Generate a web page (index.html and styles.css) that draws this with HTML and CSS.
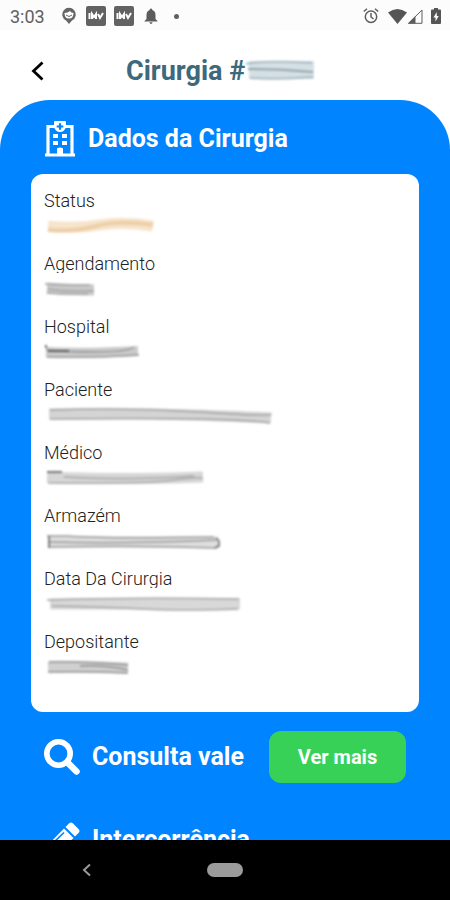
FILE: index.html
```html
<!DOCTYPE html>
<html lang="pt-BR">
<head>
    <meta charset="UTF-8">
    <meta name="viewport" content="width=device-width, initial-scale=1.0">
    <title>Cirurgia</title>
    <link rel="stylesheet" href="styles.css">
</head>
<body>
    <div class="app">
        <div class="status-bar">
            <span class="time">3:03</span>
            <svg width="16" height="18" viewBox="0 0 16 18">
                <path d="M8 17L5 13.500A6.700 6.700 0 1 1 11 13.500Z" fill="#666"/>
                <path d="M3.500 6Q7 6 9 4Q10 6 12.500 6Q12.500 11.500 8 11.500T3.500 6Z" fill="#fff"/>
                <path d="M5 8Q8 11 11 8" fill="none" stroke="#666" stroke-width="1"/>
            </svg>
            <svg class="tile" width="20" height="20" viewBox="0 0 20 20">
                <rect width="20" height="20" rx="2" fill="#626262"/>
                <path d="M3.500 7V13M6 13V8L8 11L10 8V13M12 8L14 12L17 7" fill="none" stroke="#fff" stroke-width="2"/>
            </svg>
            <svg width="20" height="20" viewBox="0 0 20 20">
                <rect width="20" height="20" rx="2" fill="#626262"/>
                <path d="M3.500 7V13M6 13V8L8 11L10 8V13M12 8L14 12L17 7" fill="none" stroke="#fff" stroke-width="2"/>
            </svg>
            <svg class="bell" width="14" height="16" viewBox="0 0 14 16">
                <path d="M7 0.500A1.300 1.300 0 0 1 8.300 2Q11.500 3 11.500 7V11L13.500 13V13.500H0.500V13L2.500 11V7Q2.500 3 5.700 2A1.300 1.300 0 0 1 7 0.500ZM5.300 14.300H8.700Q8 16 7 16T5.300 14.300Z" fill="#5c5c5c"/>
            </svg>
            <i class="dot"></i>
            <div class="system">
                <svg width="16" height="16" viewBox="0 0 16 16" fill="none" stroke="#5c5c5c" stroke-width="1.500">
                    <circle cx="8" cy="8.700" r="5.700"/>
                    <path d="M0.800 3.500L4 0.800M12 0.800L15.200 3.500M8 5V9L10.500 11"/>
                </svg>
                <svg class="wifi" width="19" height="15" viewBox="0 0 19 15">
                    <path d="M0 3.500Q9.500-3.500 19 3.500L9.500 15Z" fill="#555"/>
                </svg>
                <svg class="signal" width="16" height="15" viewBox="0 0 16 15">
                    <path d="M1.500 14.300L15 1V14.300Z" fill="none" stroke="#5c5c5c"/>
                    <path d="M1 14.500L8.500 7V14.500Z" fill="#5c5c5c"/>
                </svg>
                <svg class="battery" width="10" height="16" viewBox="0 0 10 16">
                    <path d="M3 0H7V1.500H9Q10 1.500 10 2.500V15Q10 16 9 16H1Q0 16 0 15V2.500Q0 1.500 1 1.500H3Z" fill="#555"/>
                    <path d="M5.800 4L2.500 9.500H4.500V13.500L7.700 8H5.800Z" fill="#fff"/>
                </svg>
            </div>
        </div>

        <header class="header">
            <button class="back" aria-label="Voltar">
                <svg width="14" height="22" viewBox="0 0 14 22">
                    <path d="M12.500 2.500L3.500 11L12.500 19.500" fill="none" stroke="#000" stroke-width="2.800"/>
                </svg>
            </button>
            <h1>Cirurgia #</h1>
            <svg class="smudge" width="76" height="22" viewBox="0 0 76 22">
                <path d="M4 10H69" stroke="#d6e0e4" stroke-width="18"/>
                <path d="M1 4Q20 0 67 3M5 18Q34 20 68 17" stroke="#a9bcc3" stroke-width="2"/>
                <path d="M3 9Q35 9 68 12" stroke="#8fa5ae" stroke-width="2"/>
            </svg>
        </header>

        <main class="panel">
            <div class="section-title">
                <svg width="32" height="36" viewBox="0 0 32 36">
                    <path d="M4 34V5.500H11M21 5.500H28V34" fill="none" stroke="#fff" stroke-width="3.200"/>
                    <path d="M1 34H31" stroke="#fff" stroke-width="3.200"/>
                    <path d="M11 0H21Q22 0 22 1V6Q20.500 11 16 11T10 6V1Q10 0 11 0Z" fill="#fff"/>
                    <path d="M16 2.200V8.800M12.700 5.500H19.300" stroke="#0084ff" stroke-width="2.200"/>
                    <path d="M9 13H14V17H9ZM18 13H23V17H18ZM9 20H14V24H9ZM18 20H23V24H18ZM13 34V28Q13 26.500 16 26.500T19 28V34Z" fill="#fff"/>
                </svg>
                <h2>Dados da Cirurgia</h2>
            </div>

            <dl class="card">
                <div class="field">
                    <dt>Status</dt>
                    <dd>
                        <svg class="smudge" width="116" height="18" viewBox="0 0 116 18">
                            <path d="M4 9Q30 12 55 8T109 9" stroke="#f6e4cc" stroke-width="11"/>
                            <path d="M4 13Q30 15 52 9T109 8" stroke="#edcfa8" stroke-width="4"/>
                        </svg>
                    </dd>
                </div>
                <div class="field">
                    <dt class="cut">Agendamento</dt>
                    <dd>
                        <svg class="smudge" width="58" height="18" viewBox="0 0 58 18">
                            <path d="M3 8Q26 10 50 10" stroke="#c9c9c9" stroke-width="11"/>
                            <path d="M1 4Q14 5 46 5M4 9Q20 12 50 11M3 13Q24 15 44 14" stroke="#a3a3a3" stroke-width="1.500"/>
                        </svg>
                    </dd>
                </div>
                <div class="field">
                    <dt>Hospital</dt>
                    <dd>
                        <svg class="smudge" width="100" height="18" viewBox="0 0 100 18">
                            <path d="M2 9Q40 11 94 8" stroke="#cacaca" stroke-width="10"/>
                            <path d="M2 7Q20 9 52 9T90 4M3 14Q50 15 95 12" stroke="#989898" stroke-width="1.500"/>
                            <path d="M2 2V5M4 8H25" stroke="#444" stroke-width="1.500"/>
                        </svg>
                    </dd>
                </div>
                <div class="field">
                    <dt>Paciente</dt>
                    <dd>
                        <svg class="smudge" width="232" height="20" viewBox="0 0 232 20">
                            <path d="M5 8Q90 7 150 9T227 12" stroke="#d4d4d4" stroke-width="11"/>
                            <path d="M6 4Q80 1 155 6T227 8M6 13Q100 12 154 13T226 17" stroke="#a3a3a3" stroke-width="1.500"/>
                        </svg>
                    </dd>
                </div>
                <div class="field">
                    <dt>Médico</dt>
                    <dd>
                        <svg class="smudge" width="164" height="18" viewBox="0 0 164 18">
                            <path d="M3 8Q70 11 159 8" stroke="#d6d6d6" stroke-width="11"/>
                            <path d="M20 8Q80 12 150 7M4 14Q100 15 130 11T158 10" stroke="#a8a8a8" stroke-width="1.500"/>
                            <path d="M3 3H18" stroke="#777" stroke-width="2"/>
                        </svg>
                    </dd>
                </div>
                <div class="field">
                    <dt>Armazém</dt>
                    <dd>
                        <svg class="smudge" width="180" height="20" viewBox="0 0 180 20">
                            <path d="M4 10H174" stroke="#dedede" stroke-width="11"/>
                            <path d="M3 4H24Q60 7 170 5M5 10Q80 12 172 8M5 15Q90 13 172 16" stroke="#999" stroke-width="1.500"/>
                            <path d="M5 4V16M172 6L175 9V14L171 16" stroke="#666" stroke-width="1.500"/>
                        </svg>
                    </dd>
                </div>
                <div class="field">
                    <dt class="cut">Data Da Cirurgia</dt>
                    <dd>
                        <svg class="smudge" width="200" height="18" viewBox="0 0 200 18">
                            <path d="M6 9H196" stroke="#d8d8d8" stroke-width="11"/>
                            <path d="M3 5Q90 2 195 4M8 11Q60 12 100 14T194 14" stroke="#a5a5a5" stroke-width="1.500"/>
                        </svg>
                    </dd>
                </div>
                <div class="field">
                    <dt>Depositante</dt>
                    <dd>
                        <svg class="smudge" width="90" height="18" viewBox="0 0 90 18">
                            <path d="M4 9Q40 8 84 10" stroke="#d0d0d0" stroke-width="11"/>
                            <path d="M5 4Q30 3 84 7M36 8Q60 7 84 12M4 14Q40 13 84 15" stroke="#909090" stroke-width="1.500"/>
                        </svg>
                    </dd>
                </div>
            </dl>

            <div class="row">
                <svg width="36" height="36" viewBox="0 0 36 36">
                    <circle cx="14.500" cy="14.500" r="11.700" fill="none" stroke="#fff" stroke-width="5.600"/>
                    <path d="M24 24L32.500 32.500" stroke="#fff" stroke-width="6.500" stroke-linecap="round"/>
                </svg>
                <h2>Consulta vale</h2>
                <button class="more">Ver mais</button>
            </div>

            <div class="row">
                <svg width="36" height="36" viewBox="0 0 36 36">
                    <path d="M25 1.500Q27-0.500 29 1.500L34.500 7Q36.500 9 34.500 11L31 14.500L21.500 5Z" fill="#fff"/>
                    <path d="M20 6.500L29.500 16L10 35L0 36L1 26Z" fill="#fff"/>
                    <path d="M9 21L20 10.500" stroke="#0084ff" stroke-width="1.600"/>
                </svg>
                <h2>Intercorrência</h2>
            </div>
        </main>

        <nav class="nav-bar">
            <button class="nav-back" aria-label="Voltar">
                <svg width="10" height="14" viewBox="0 0 10 14">
                    <path d="M8 1.500L2 7L8 12.500" fill="none" stroke="#999" stroke-width="2"/>
                </svg>
            </button>
            <button class="nav-home" aria-label="Início"></button>
        </nav>
    </div>
</body>
</html>
```
FILE: styles.css
```css
* {
    margin: 0;
    padding: 0;
    box-sizing: border-box;
}
body {
    font-family: Roboto, "Liberation Sans", sans-serif;
    background: #fff;
}
button {
    border: none;
    background: none;
    font-family: inherit;
    cursor: pointer;
}
svg {
    display: block;
    flex: none;
}

.app {
    display: flex;
    flex-direction: column;
    height: 100vh;
    overflow: hidden;
}

.status-bar {
    display: flex;
    align-items: center;
    gap: 8px;
    height: 30px;
    padding: 2px 9px 0 10px;
    background: #fcfcfc;
}
.time {
    margin-right: 8px;
    font-size: 18px;
    color: #606060;
}
.tile {
    margin-left: 1px;
}
.bell {
    margin-left: 2px;
}
.dot {
    width: 5px;
    height: 5px;
    margin-left: 8px;
    border-radius: 50%;
    background: #606060;
}
.system {
    display: flex;
    align-items: center;
    margin-left: auto;
}
.wifi {
    margin-left: 9px;
}
.battery {
    margin-left: 8px;
}

.header {
    display: flex;
    align-items: center;
    height: 70px;
    padding: 12px 30px 0;
}
.back {
    width: 96px;
    height: 40px;
    display: flex;
    align-items: center;
}
h1 {
    font-size: 27px;
    line-height: 32px;
    color: #3c6a7c;
}
.smudge {
    fill: none;
    filter: blur(1px);
}

.panel {
    flex: 1;
    min-height: 0;
    overflow: hidden;
    padding: 0 31px;
    border-radius: 50px 50px 0 0;
    background: #0084ff;
}
h2 {
    font-size: 25px;
    line-height: 32px;
    color: #fff;
}
.section-title {
    display: flex;
    align-items: center;
    gap: 12px;
    height: 74px;
    padding: 3px 13px 0;
}
.card {
    padding: 15px 13px 19px;
    border-radius: 12px;
    background: #fff;
}
.field {
    height: 63px;
}
dt {
    font-size: 18px;
    font-weight: 300;
    line-height: 24px;
    color: #222;
}
.cut {
    clip-path: inset(0 0 3px);
}
dd {
    padding-top: 4px;
}

.row {
    display: flex;
    align-items: center;
    gap: 12px;
    height: 52px;
    margin: 19px 13px 31px;
}
.more {
    width: 137px;
    height: 52px;
    margin-left: auto;
    border-radius: 12px;
    background: #38d158;
    color: #fff;
    font-size: 20px;
    font-weight: bold;
}

.nav-bar {
    display: grid;
    grid-template-columns: 1fr 36px 1fr;
    align-items: center;
    flex: none;
    height: 60px;
    background: #000;
}
.nav-back {
    display: flex;
    justify-content: center;
    padding-right: 34px;
}
.nav-home {
    height: 14px;
    border-radius: 7px;
    background: #9b9b9b;
}
```
